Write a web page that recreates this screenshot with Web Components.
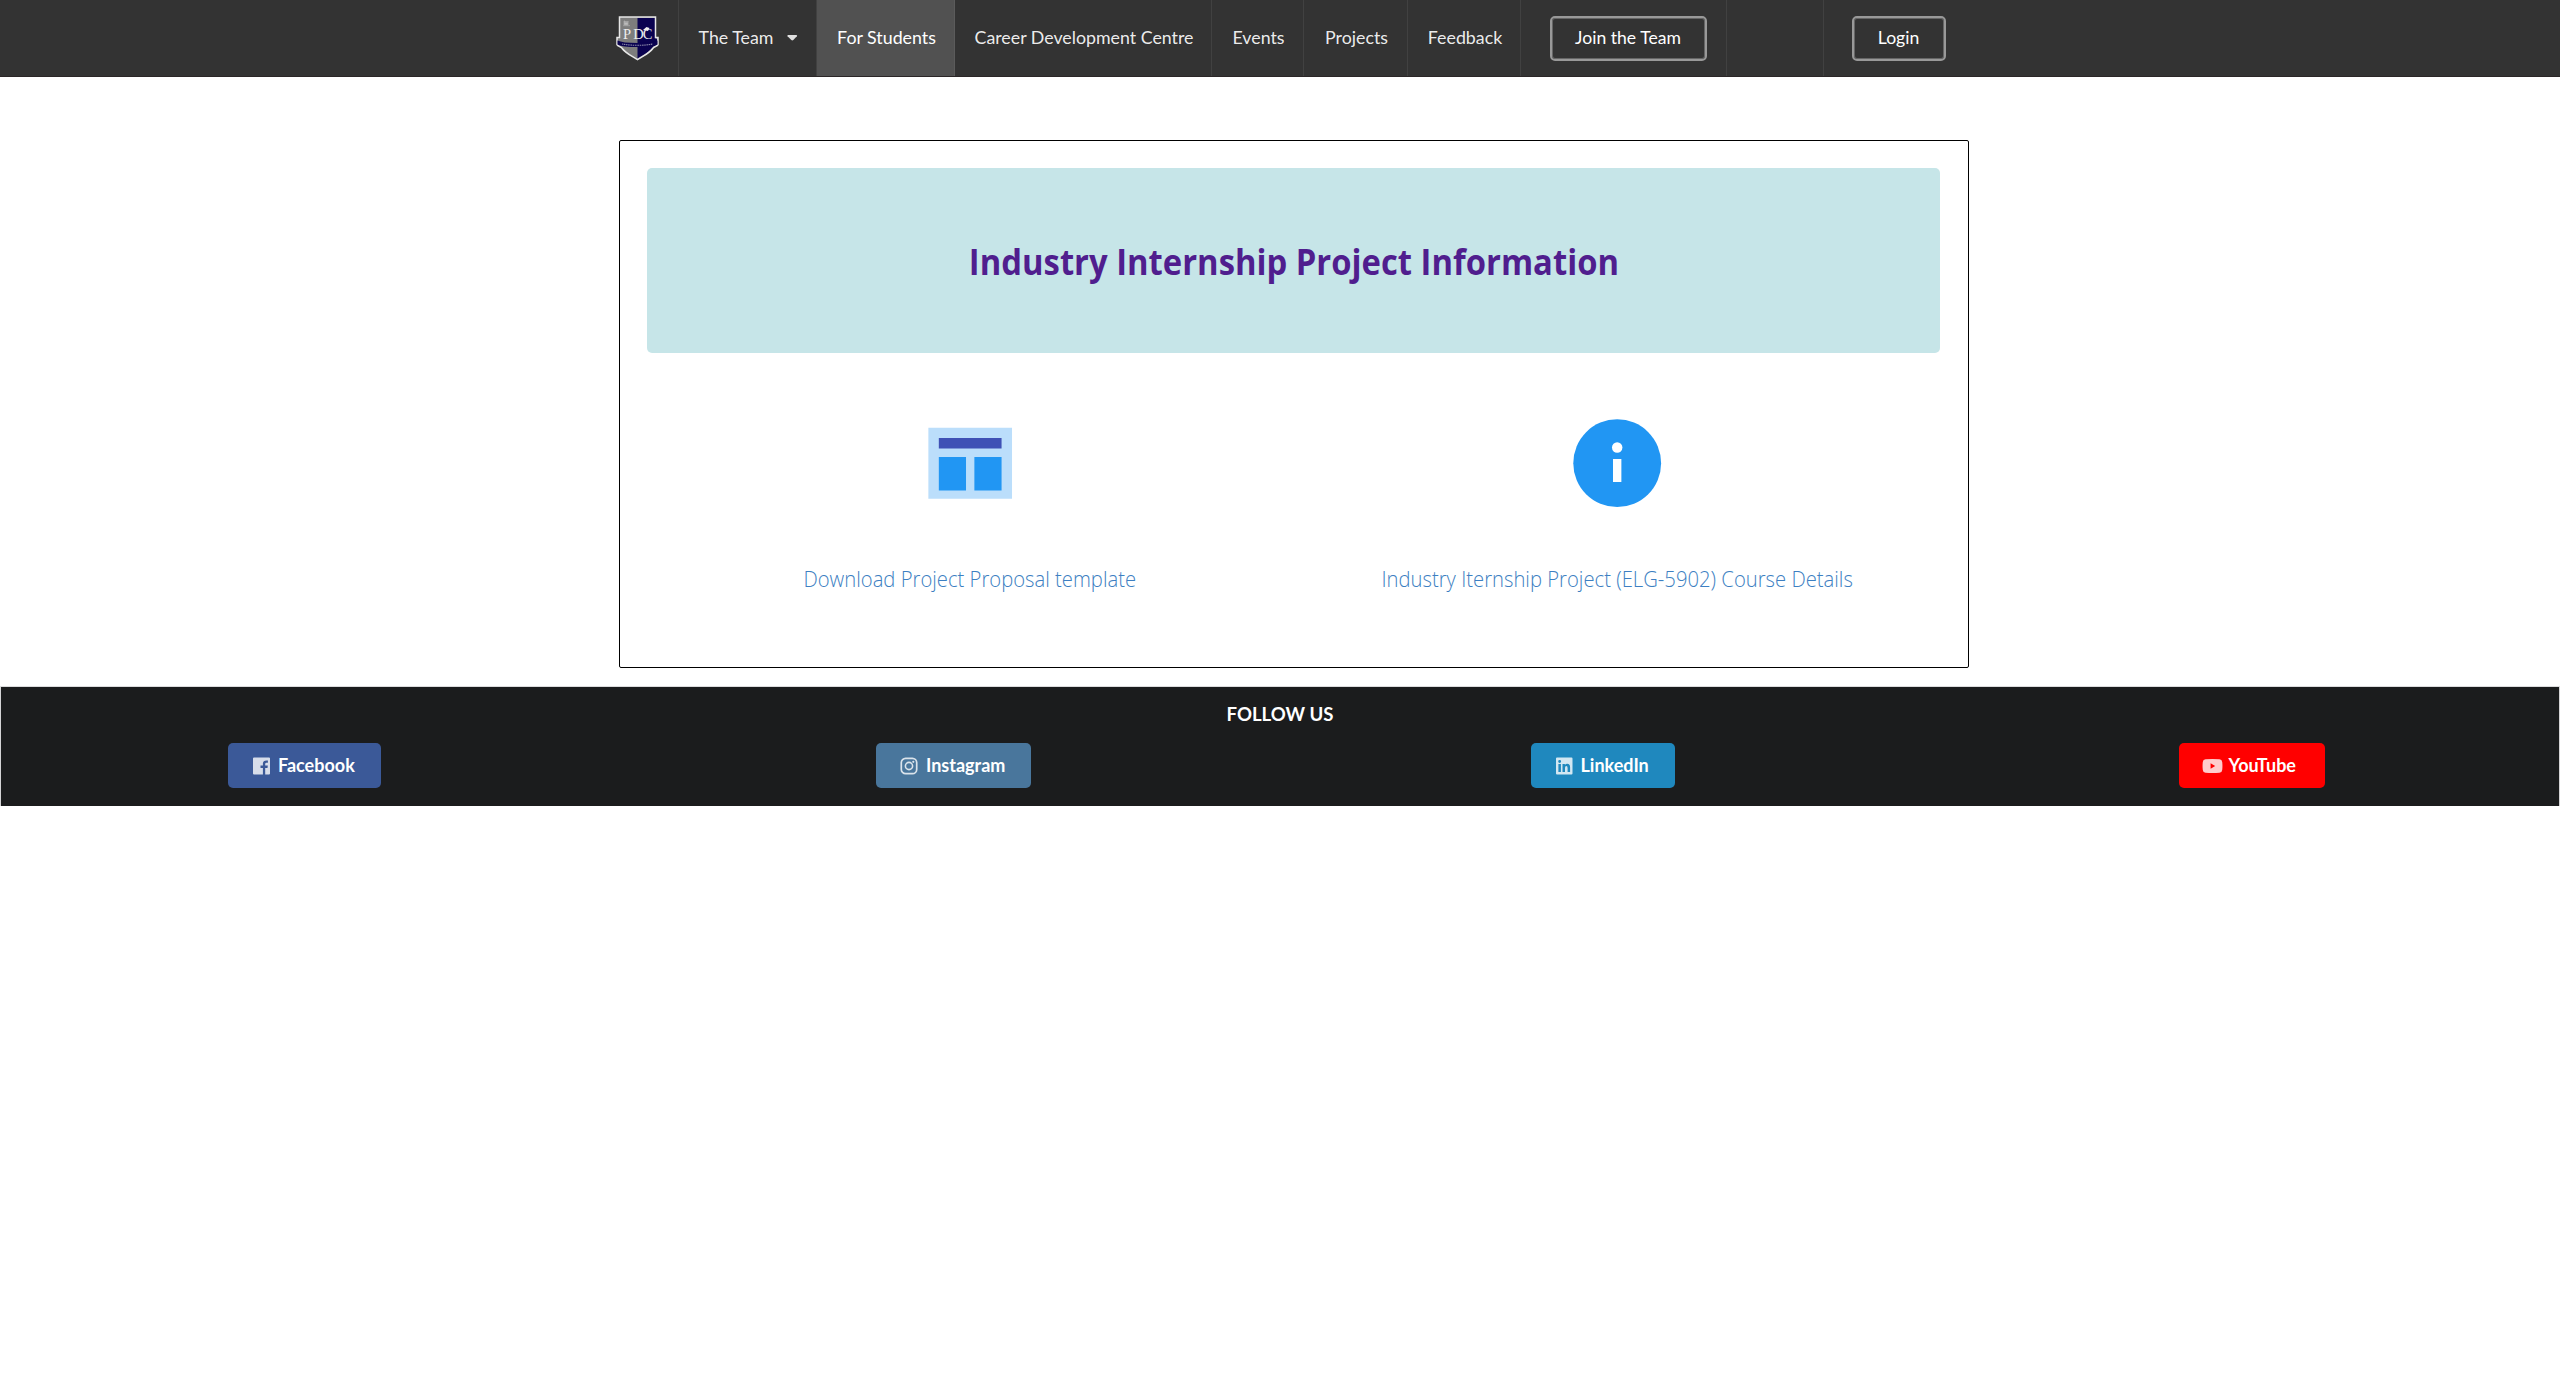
<!DOCTYPE html>
<html lang="en">
<head>
<meta charset="utf-8">
<title>PDC</title>
<style>
html,body{margin:0;padding:0;background:#fff;overflow-x:hidden}
body{font-family:Lato,"Liberation Sans",sans-serif;font-size:18px;line-height:1.4285}
</style>
</head>
<body>
<site-page></site-page>

<template id="t-page">
<style>
:host{display:flex;flex-direction:column}
main{display:flex;justify-content:center;padding:63px 0 19px;margin-left:28px}
</style>
<nav-bar></nav-bar>
<main>
  <info-card heading="Industry Internship Project Information">
    <resource-link icon="template">Download Project Proposal template</resource-link>
    <resource-link icon="info">Industry Iternship Project (ELG-5902) Course Details</resource-link>
  </info-card>
</main>
<social-footer></social-footer>
</template>

<template id="t-nav">
<style>
:host{display:flex;height:76px;background:#333;border-bottom:1px solid #2b2627;padding-left:596px;box-sizing:content-box}
</style>
<nav-item style="--w:83px;--shift:0px"><pdc-logo></pdc-logo></nav-item>
<nav-item style="--w:138px" caret>The Team</nav-item>
<nav-item style="--w:138px" active>For Students</nav-item>
<nav-item style="--w:257px">Career Development Centre</nav-item>
<nav-item style="--w:92px">Events</nav-item>
<nav-item style="--w:104px">Projects</nav-item>
<nav-item style="--w:113px">Feedback</nav-item>
<nav-item style="--w:206px;--shift:9px"><outline-button style="--bw:157px">Join the Team</outline-button></nav-item>
<nav-item style="--w:97px"></nav-item>
<nav-item style="--w:149px;--shift:0px" last><outline-button style="--bw:94px">Login</outline-button></nav-item>
</template>

<template id="t-item">
<style>
:host{display:flex;align-items:center;justify-content:center;box-sizing:border-box;width:var(--w);height:76px;padding-left:var(--shift,2px);border-right:1px solid #414141;color:rgba(255,255,255,.92);font-size:17.8px;white-space:nowrap}
:host([active]){background:#515151;color:#fff;border-color:#5b5b5b}
:host([last]){border:0}
svg{display:none;margin-left:14px}
:host([caret]) svg{display:block}
</style>
<slot></slot><svg width="11" height="6" viewBox="0 0 11 6"><path d="M1 0h8.4q1.2.3.5 1.3L6.300 5q-1 .8-2 0L.6 1.300Q0 .3 1 0z" fill="#e0e0e0"/></svg>
</template>

<template id="t-outline">
<style>
:host{display:flex;align-items:center;justify-content:center;box-sizing:border-box;width:var(--bw);height:45px;border:2px solid #999;box-shadow:inset 0 0 0 1px #666;border-radius:5px;color:#fff;font-size:17.6px}
</style>
<slot></slot>
</template>

<template id="t-logo">
<style>:host{display:block;width:43px;height:45px}svg{display:block}</style>
<svg width="43" height="45" viewBox="0 0 43 45">
  <path d="M3.500 1h36v20.500h2.500v7.200c-1 2-4 1.500-5 3.500-3.500 5-9.500 7.500-15.500 11.500-6-4-12-6.500-15.500-11.500-1-2-4-1.500-5-3.500v-7.200h2.500z" fill="#7d7d7d"/>
  <path d="M21.500 2H39v20l2 1v5c-1 2-4 2-5 4-3 4-9 7-14.500 10.500z" fill="#0a0250"/>
  <path d="M3.500 1h36v20.500h2.500v7.200c-1 2-4 1.500-5 3.500-3.500 5-9.500 7.500-15.500 11.500-6-4-12-6.500-15.500-11.500-1-2-4-1.500-5-3.500v-7.200h2.500z" fill="none" stroke="#e6e6e6" stroke-width="1.500"/>
  <path d="M1.500 24.500q5 2.500 20 2.500T41.500 24.500v4q-5 2.600-20 2.600T1.500 28.500z" fill="#0a0250"/>
  <path d="M6 28q7 1.300 15.500 1.300T37 28" fill="none" stroke="#8a88a8" stroke-width="1.100" stroke-dasharray="1.500 .7"/>
  <path d="M8 5h1v2l1-2 1 2 1-2v4H8zM7 9.700h7" fill="#bbb" stroke="#aaa" stroke-width=".8"/>
  <g fill="#ececec" font-family="Liberation Serif,serif" font-size="14.500"><text x="7" y="23">P</text><text x="17.300" y="23">D</text><text x="26.800" y="23">C</text></g>
  <path d="M27 14l3.500-3 3 1-1.500 3z" fill="#eee"/>
</svg>
</template>

<template id="t-card">
<style>
:host{display:block;box-sizing:border-box;width:1350px;height:528px;border:1px solid #000;border-radius:2px;padding:27px 28px 0 27px}
header{display:flex;align-items:center;justify-content:center;height:185px;border-radius:5px;background:#c6e5e8}
h1{margin:3px 0 0;font:bold 35px/1.3 "Open Sans",sans-serif;color:#501e8e;white-space:nowrap;transform:scaleX(.937)}
div{display:flex}
</style>
<header><h1></h1></header>
<div><slot></slot></div>
</template>

<template id="t-res">
<style>
:host{display:flex;flex:1;flex-direction:column;align-items:center;padding-top:59.600px}
svg{display:none;width:100.4px;height:100.4px}
:host([icon=template]) .t,:host([icon=info]) .i{display:block}
a{margin-top:50px;font:300 22px/30px "Open Sans",sans-serif;color:#3d7fc2;white-space:nowrap;transform:scaleX(.92)}
</style>
<svg class="t" viewBox="0 0 48 48"><path d="M4 7h40v34H4z" fill="#bbdefb"/><path d="M9 12h30v5H9z" fill="#3f51b5"/><path d="M9 21h13v16H9zM26 21h13v16H26z" fill="#2196f3"/></svg>
<svg class="i" viewBox="0 0 48 48"><circle cx="24" cy="24" r="21" fill="#2196f3"/><path d="M22 22h4v11h-4z" fill="#fff"/><circle cx="24" cy="16.500" r="2.500" fill="#fff"/></svg>
<a><slot></slot></a>
</template>

<template id="t-footer">
<style>
:host{display:block;height:119px;margin:0 1px;background:#1b1c1d;box-shadow:0 1px 2px rgba(34,36,38,.15),0 0 0 1px rgba(34,36,38,.15)}
h4{margin:0;padding-top:15px;height:41px;box-sizing:border-box;text-align:center;color:#fff;font-size:18.600px;line-height:24px}
.clip{overflow:hidden;padding-top:15px}
.row{display:flex;margin:0 -17px 0 -21px}
section{flex:1;display:flex;justify-content:center}
</style>
<h4>FOLLOW US</h4>
<div class="clip"><div class="row">
<section><social-button icon="facebook" style="--bg:#3b5998;--bw:153px">Facebook</social-button></section>
<section><social-button icon="instagram" style="--bg:#49769c;--bw:155px">Instagram</social-button></section>
<section><social-button icon="linkedin" style="--bg:#1f88be;--bw:144px">LinkedIn</social-button></section>
<section><social-button icon="youtube" style="--bg:#f00;--bw:146px">YouTube</social-button></section>
</div></div>
</template>

<template id="t-social">
<style>
:host{display:flex;align-items:center;box-sizing:border-box;width:var(--bw);height:45px;padding-left:23px;border-radius:5px;background:var(--bg);color:#fff;font-weight:bold;font-size:18px;white-space:nowrap}
svg{display:none;width:21px;height:18px;margin-right:6px;opacity:.8}
:host([icon=facebook]) .facebook,:host([icon=instagram]) .instagram,:host([icon=linkedin]) .linkedin,:host([icon=youtube]) .youtube{display:block}
</style>
<svg class="facebook" viewBox="0 0 21 18" fill="#fff"><path d="M3 .5h15q1 0 1 1v15q0 1-1 1h-3.800v-6.600h2.300l.3-2.400h-2.600V7q0-1.200 1.200-1.200h1.500V3.600q-4.900-.7-5 2.900v2H9.500v2.400h2.400v6.600H3q-1 0-1-1v-15q0-1 1-1z"/></svg>
<svg class="instagram" viewBox="0 0 21 18" fill="none" stroke="#fff"><rect x="2.300" y="1.300" width="15.400" height="15.400" rx="4.300" stroke-width="1.700"/><circle cx="10" cy="9" r="3.600" stroke-width="1.600"/><circle cx="14.300" cy="4.800" r="1.100" fill="#fff" stroke="none"/></svg>
<svg class="linkedin" viewBox="0 0 21 18" fill="#fff"><path fill-rule="evenodd" d="M3 .5h14.500q1 0 1 1v15q0 1-1 1H3q-1 0-1-1v-15q0-1 1-1zM4.400 7v8.100h2.500V7zM5.650 3a1.450 1.450 0 1 0 0 2.900 1.450 1.450 0 0 0 0-2.900zM8.500 7v8.100H11v-4q0-2 1.300-2 1.300 0 1.300 2v4h2.500v-4.600q0-3.700-2.800-3.700-1.700 0-2.400 1.300V7z"/></svg>
<svg class="youtube" viewBox="0 0 21 18" fill="#fff"><path fill-rule="evenodd" d="M3.500 2.300q7-.8 14 0 2.500.2 2.700 2.700.5 4 0 8-.2 2.500-2.700 2.700-7 .8-14 0Q1 15.500.8 13q-.5-4 0-8 .2-2.500 2.700-2.700zM8.600 6.300v5.400L13.200 9z"/></svg>
<slot></slot>
</template>

<script>
const define = (name, id, setup) => customElements.define(name, class extends HTMLElement {
  constructor() {
    super();
    this.attachShadow({ mode: 'open' }).append(document.getElementById(id).content.cloneNode(true));
  }
  connectedCallback() { if (setup) setup(this); }
});
define('pdc-logo', 't-logo');
define('outline-button', 't-outline');
define('nav-item', 't-item');
define('nav-bar', 't-nav');
define('resource-link', 't-res');
define('info-card', 't-card', el => { el.shadowRoot.querySelector('h1').textContent = el.getAttribute('heading'); });
define('social-button', 't-social');
define('social-footer', 't-footer');
define('site-page', 't-page');
</script>
</body>
</html>
